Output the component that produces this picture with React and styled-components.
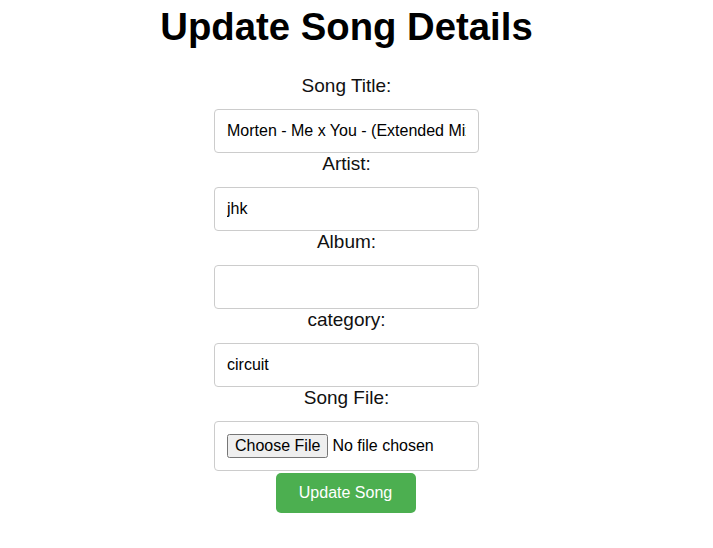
import React from 'react';
import styled, { createGlobalStyle } from 'styled-components';

const GlobalStyle = createGlobalStyle`
    body {
        margin: 0;
        background: #fff;
        font-family: "Liberation Sans", Arial, sans-serif;
        color: #000;
    }
`

const Page = styled.div`
    width: 693px;
    display: flex;
    flex-direction: column;
    align-items: center;
`

const Title = styled.h1`
    font-size: 38.3px;
    font-weight: bold;
    margin: 5px 0 26px;
    line-height: 44px;
`

const Form = styled.form`
    display: flex;
    flex-direction: column;
    align-items: center;
`

const Label = styled.label`
    display: block;
    font-size: 19px;
    line-height: 22px;
    margin-bottom: 12px;
    color: #111;
`

const Input = styled.input`
    box-sizing: border-box;
    width: 265px;
    height: ${props => props.tall ? '50px' : '44px'};
    padding: ${props => props.tall ? '12px' : '0 12px'};
    border: 1px solid #ccc;
    border-radius: 4px;
    font-family: "Liberation Sans", Arial, sans-serif;
    font-size: 16px;
    color: #000;
    background: #fff;
    outline: none;
`

const SubmitButton = styled.button`
    margin-top: 2px;
    margin-left: -2px;
    width: 140px;
    height: 40px;
    background: #4caf50;
    color: #fff;
    border: none;
    border-radius: 5px;
    font-family: "Liberation Sans", Arial, sans-serif;
    font-size: 16px;
    cursor: pointer;
`

const fields = [
    { label: 'Song Title:', value: 'Morten - Me x You - (Extended Mix)' },
    { label: 'Artist:', value: 'jhk' },
    { label: 'Album:', value: '' },
    { label: 'category:', value: 'circuit' },
]

export default function App() {
    return (
        <>
            <GlobalStyle />
            <Page>
                <Title>Update Song Details</Title>
                <Form onSubmit={(e) => e.preventDefault()}>
                    {fields.map((f) => (
                        <React.Fragment key={f.label}>
                            <Label>{f.label}</Label>
                            <Input type="text" defaultValue={f.value} />
                        </React.Fragment>
                    ))}
                    <Label>Song File:</Label>
                    <Input type="file" tall />
                    <SubmitButton type="submit">Update Song</SubmitButton>
                </Form>
            </Page>
        </>
    );
}
